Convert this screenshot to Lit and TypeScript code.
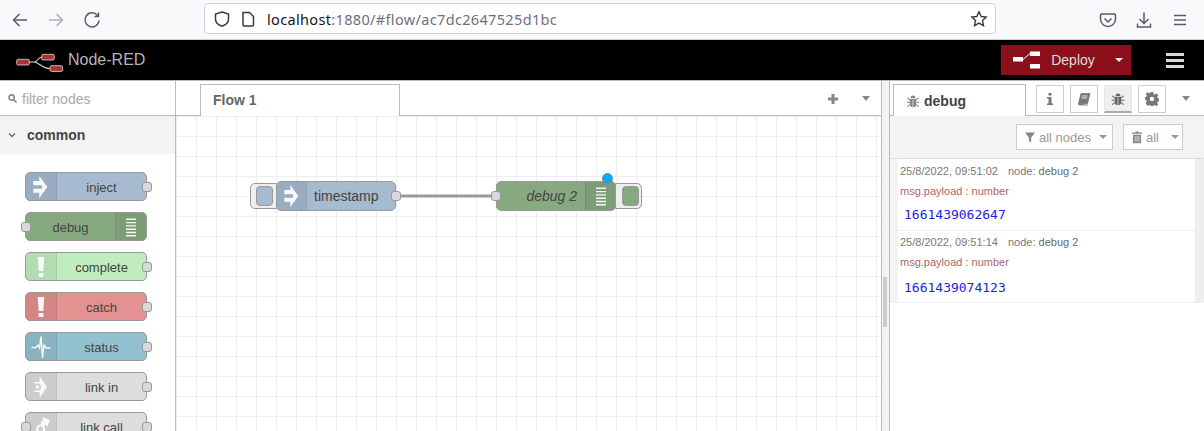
import { LitElement, html, css, svg } from "lit";
import { customElement } from "lit/decorators.js";

const injectIcon = svg`<path d="M.3 5H6.300V0L14.300 11 6.300 22V16.700H.3V12.700H9V9.300H.3z" fill="#fff" fill-opacity=".92"/>`;
const debugIcon = svg`<path d="M3 2.600h10V4H3zM3 5.900h10v1.400H3zM3 9.200h10v1.400H3zM3 12.500h10v1.400H3zM3 15.800h10v1.400H3zM3 19.100h10v1.400H3z" fill="#fff" fill-opacity=".92"/>`;
const bang = svg`<path d="M4.700 1h6.600l-1 14H5.700zM5.600 17h4.800v4H5.600z" fill="#fff" fill-opacity=".92"/>`;
const pulse = svg`<path d="M-1.500 11.500H3L5 9l1.500 3L8 .5 9.500 22 11 9l2 3h4.500" fill="none" stroke="#fff" stroke-opacity=".92" stroke-width="1.400"/>`;
const linkIn = svg`<path fill-rule="evenodd" d="M6.600 0L14 11 6.600 22v-6H1v-1.500h3.500a3.500 3.500 0 0 0 0-7H1V6h5.600z" fill="#fff" fill-opacity=".85"/><circle cx="4.500" cy="11" r="1.800" fill="#fff" fill-opacity=".85"/>`;
const linkCall = svg`<path d="M9 1l8 3-3 7-1.500-2.500L9 11 7.500 6l3-1.500z" fill="#fff" fill-opacity=".92"/><circle cx="7.700" cy="13" r="3.500" fill="none" stroke="#fff" stroke-opacity=".92" stroke-width="2"/>`;
const bug = svg`<path d="M5.200 4.500a2.800 2.800 0 0 1 5.600 0zM4.300 5.500h7.400v6a3.700 3.700 0 0 1-7.400 0z" fill="currentColor"/><path d="M1.500 4.500l2.800 2.300M14.500 4.500l-2.800 2.300M.8 9.500h3.500M15.200 9.500h-3.500M1.500 14.500l2.800-2.300M14.500 14.500l-2.800-2.300" fill="none" stroke="currentColor" stroke-width="1.200"/><path d="M7.600 6.500h.8v8.500h-.8z" fill="#f3f3f3"/>`;

type PNode = { label: string; color: string; icon: any; right?: boolean; inPort?: boolean; outPort?: boolean };
const nodes: PNode[] = [
  { label: "inject", color: "#a6bbcf", icon: injectIcon, outPort: true },
  { label: "debug", color: "#87a980", icon: debugIcon, right: true, inPort: true },
  { label: "complete", color: "#c0edc0", icon: bang, outPort: true },
  { label: "catch", color: "#e49191", icon: bang, outPort: true },
  { label: "status", color: "#94c1d0", icon: pulse, outPort: true },
  { label: "link in", color: "#dddddd", icon: linkIn, outPort: true },
  { label: "link call", color: "#dddddd", icon: linkCall, inPort: true, outPort: true },
];

@customElement("app-root")
export class AppRoot extends LitElement {
  static styles = css`
    :host { display: block; width: 1204px; height: 431px; overflow: hidden; font-family: "Liberation Sans", Arial, sans-serif; background: #fff; }
    .browser { height: 39px; background: #f9f9fb; border-bottom: 1px solid #cfcfd8; display: flex; align-items: center; box-sizing: content-box; }
    .nav { display: flex; width: 204px; padding-left: 10px; box-sizing: border-box; gap: 16px; color: #5b5b66; }
    .nav svg, .tools svg { width: 20px; height: 20px; display: block; }
    .url { width: 792px; height: 31px; margin-bottom: 2px; box-sizing: border-box; border: 1px solid #cfcfd8; border-radius: 4px; background: #fff; display: flex; align-items: center; padding: 1px 7px 0 8px; }
    .url svg { flex: none; width: 18px; height: 18px; }
    .url .page { margin-left: 9px; margin-right: 11px; width: 16px; height: 18px; }
    .addr { flex: 1; font-family: "Noto Sans", sans-serif; font-size: 14.5px; color: #15141a; white-space: nowrap; letter-spacing: 0.34px; }
    .addr span { color: #6f6f78; }
    .tools { display: flex; margin-left: 102px; gap: 16px; }
    .header { height: 40px; background: #000; border-bottom: 1px solid #b7b7b7; box-sizing: content-box; display: flex; align-items: center; }
    .logo { display: flex; align-items: center; margin-left: 16px; color: #b4b4b4; font-size: 16px; }
    .logo svg { width: 48px; height: 24px; margin-right: 4px; display: block; }
    .deploy { margin-left: auto; width: 130px; height: 30px; background: #8c101c; color: #ddd; display: flex; align-items: center; font-size: 14px; }
    .deploy svg { width: 28px; height: 18px; margin-left: 12px; }
    .deploy .lbl { margin-left: 3px; width: 58px; text-align: center; }
    .caret { width: 0; height: 0; border-left: 4.5px solid transparent; border-right: 4.5px solid transparent; border-top: 5px solid currentColor; display: block; flex: none; }
    .deploy .caret { color: #eee; margin-left: 13px; border-left-width: 4px; border-right-width: 4px; border-top-width: 4px; }
    .burger { width: 73px; display: flex; flex-direction: column; align-items: center; gap: 3px; padding-left: 15px; box-sizing: border-box; }
    .burger i { display: block; width: 18px; height: 3px; background: #d8d8d8; }
    .main { height: 350px; display: flex; }
    .palette { width: 176px; flex: none; border-right: 1px solid #bbb; box-sizing: border-box; overflow: hidden; }
    .search { height: 35px; border-bottom: 1px solid #bbb; box-sizing: border-box; display: flex; align-items: center; padding: 1px 0 0 8px; color: #aaa; font-size: 14px; gap: 5px; }
    .search svg { width: 9px; height: 9px; color: #888; }
    .cat { height: 38px; background: #f3f3f3; border-bottom: 1px solid #f3f3f3; display: flex; align-items: center; box-sizing: border-box; font-weight: bold; font-size: 14px; color: #444; padding-left: 8px; gap: 11px; }
    .cat svg { width: 8px; height: 8px; }
    .plist { padding-top: 18px; display: flex; flex-direction: column; gap: 11px; padding-left: 25px; }
    .pnode { position: relative; width: 122px; height: 29px; border: 1px solid #999; border-radius: 5px; box-sizing: border-box; display: flex; font-size: 13px; color: #444; align-items: center; }
    .ic { width: 31px; flex: none; height: 100%; background: rgba(0,0,0,.07); border-right: 1px solid rgba(0,0,0,.08); box-sizing: border-box; display: flex; align-items: center; justify-content: center; border-radius: 4px 0 0 4px; }
    .ic svg { width: 16px; height: 22px; display: block; overflow: visible; }
    .pnode.r .ic { border-right: 0; border-left: 1px solid rgba(0,0,0,.08); border-radius: 0 4px 4px 0; }
    .pnode .t { flex: 1; text-align: center; padding: 2px 0 0 0; }
    .port { position: absolute; width: 10px; height: 10px; background: #d9d9d9; border: 1px solid #999; border-radius: 3px; box-sizing: border-box; top: 9px; }
    .port.o { right: -6px; }
    .port.i { left: -5px; }
    .ws { flex: 1; position: relative; display: flex; flex-direction: column; min-width: 0; }
    .tabs { height: 35px; border-bottom: 1px solid #bbb; box-sizing: border-box; display: flex; position: relative; align-items: flex-end; padding-left: 24px; }
    .tab { width: 200px; height: 32px; border: 1px solid #bbb; border-bottom: 0; background: #fff; margin-bottom: -1px; box-sizing: border-box; font-weight: bold; font-size: 14px; color: #666; padding: 7px 12px; }
    .tabtools { position: absolute; right: 0; top: 0; height: 35px; display: flex; align-items: center; color: #888; }
    .tabtools .plus { width: 12px; height: 12px; margin-right: 21px; margin-left: -2px; transform: translateX(-2px); }
    .tabtools .plus svg { width: 12px; height: 12px; display: block; }
    .tabtools .caret { margin-right: 11px; }
    .canvas { flex: 1; position: relative; overflow: hidden;
      background-color: #fff;
      background-image: linear-gradient(#eee 1px, transparent 1px), linear-gradient(90deg, #eee 1px, transparent 1px);
      background-size: 20px 20px; background-position: 0 0; }
    .wire { position: absolute; left: 0; top: 0; width: 705px; height: 315px; }
    .node { position: absolute; top: 65px; width: 120px; height: 30px; border: 1px solid #999; border-radius: 5px; box-sizing: border-box; display: flex; align-items: center; color: #444; font-size: 14px; z-index: 2; }
    .node .ic { width: 30px; }
    .node .t { flex: 1; padding-left: 7px; }
    .node .t.it { font-style: italic; text-align: right; padding: 0 8px 0 0; }
    .node .ic.rt { border-radius: 0 4px 4px 0; border-right: 0; border-left: 1px solid rgba(0,0,0,.08); }
    .node .port { top: 9px; }
    .node .port.i { left: -6px; }
    .btn { position: absolute; top: 67px; width: 30px; height: 26px; background: #eee; border: 1px solid #999; border-radius: 5px; box-sizing: border-box; display: flex; align-items: center; padding-left: 5px; }
    .btn.rt { padding-left: 9px; }
    .btn i { display: block; width: 17px; height: 20px; border-radius: 4px; border: 1px solid #999; box-sizing: border-box; }
    .dot { position: absolute; top: -9px; right: 2px; width: 11px; height: 11px; background: #00acff; border: 1px solid #888; border-radius: 50%; box-sizing: border-box; }
    .sep { width: 9px; flex: none; background: #f3f3f3; border-left: 1px solid #bbb; border-right: 1px solid #bbb; box-sizing: border-box; position: relative; }
    .sep i { position: absolute; left: 1px; top: 196px; width: 4px; height: 50px; background: #ccc; }
    .side { width: 314px; flex: none; display: flex; flex-direction: column; }
    .stabs { height: 35px; border-bottom: 1px solid #bbb; box-sizing: border-box; display: flex; align-items: flex-end; padding-left: 3px; position: relative; }
    .stab { width: 133px; height: 32px; border: 1px solid #bbb; border-bottom: 0; background: #fff; margin-bottom: -1px; box-sizing: border-box; display: flex; align-items: center; padding-left: 12px; gap: 4px; font-weight: bold; font-size: 14px; color: #444; }
    .stab svg { width: 14px; height: 14px; color: #888; }
    .sbtns { position: absolute; left: 146px; top: 4px; display: flex; gap: 6px; }
    .sbtn { width: 28px; height: 28px; border: 1px solid #ccc; box-sizing: border-box; display: flex; align-items: center; justify-content: center; color: #777; }
    .sbtn.on { background: #efefef; border-bottom: 2px solid #aaa; border-color: #e6e6e6 #e6e6e6 #aaa; color: #666; }
    .sbtn svg { width: 14px; height: 14px; display: block; }
    .scaret { position: absolute; right: 14px; top: 15px; color: #888; }
    .dbar { height: 43px; background: #f3f3f3; border-bottom: 1px solid #ddd; box-sizing: border-box; display: flex; justify-content: flex-end; align-items: center; padding-right: 21px; gap: 10px; }
    .sel { height: 26px; border: 1px solid #ccc; background: #fff; box-sizing: border-box; display: flex; align-items: center; padding: 0 0 0 8px; font-size: 13px; color: #999; gap: 4px; width: 97px; }
    .sel.short { width: 60px; }
    .sel svg { width: 10px; height: 14px; color: #888; flex: none; }
    .sel .caret { color: #999; margin-left: 4px; border-left-width: 4px; border-right-width: 4px; border-top-width: 4px; }
    .sel.short .caret { margin-left: 8px; }
    .msgs { flex: 1; background: #fff; }
    .msg { height: 72px; border-bottom: 1px solid #eee; border-left: 8px solid #f3f3f3; border-right: 9px solid #eee; box-sizing: border-box; background: #fff; padding-left: 2px; font-size: 11px; }
    .meta { color: #777; height: 23px; padding-top: 6px; box-sizing: border-box; line-height: 13px; }
    .msg.next .meta { padding-top: 5px; height: 22px; }
    .meta b { font-weight: normal; margin-left: 7px; color: #777; }
    .meta b span { color: #6a6a6a; }
    .topic { color: #a66; height: 19px; line-height: 19px; }
    .msg.next .topic { height: 20px; }
    .val { font-family: "DejaVu Sans Mono", monospace; font-size: 13px; color: #2222e8; padding-left: 4px; margin-top: 5px; line-height: 18px; }
    .msg.next .val { margin-top: 6px; }
  `;

  render() {
    return html`
      <div class="browser">
        <div class="nav">
          <svg viewBox="0 0 20 20" fill="none" stroke="currentColor" stroke-width="1.5"><path d="M17 10H4M9.500 4l-6 6 6 6"/></svg>
          <svg viewBox="0 0 20 20" fill="none" stroke="#b0b0b6" stroke-width="1.5"><path d="M3 10h13M10.500 4l6 6-6 6"/></svg>
          <svg viewBox="0 0 20 20" fill="none" stroke="currentColor" stroke-width="1.5"><path d="M15.500 5.500A7 7 0 1 0 17 10.500M16.500 2.500v4h-4"/></svg>
        </div>
        <div class="url">
          <svg viewBox="0 0 18 18" fill="none" stroke="#3a3a44" stroke-width="1.5"><path d="M9 2l6.500 2v5c0 3.500-2.800 6-6.500 7.200C5.300 15 2.500 12.500 2.500 9V4z"/></svg>
          <svg class="page" viewBox="0 0 16 18" fill="none" stroke="#3a3a44" stroke-width="1.5"><path d="M3 2.500h6.500l4 4V15a1 1 0 0 1-1 1H4a1 1 0 0 1-1-1z"/></svg>
          <div class="addr">localhost<span>:1880/#flow/ac7dc2647525d1bc</span></div>
          <svg viewBox="0 0 18 18" fill="none" stroke="#3a3a44" stroke-width="1.4"><path d="M9 1.800l2.200 4.700 5 .6-3.700 3.500 1 5L9 13.100l-4.500 2.500 1-5L1.800 7.100l5-.6z"/></svg>
        </div>
        <div class="tools">
          <svg viewBox="0 0 20 20" fill="none" stroke="#5b5b66" stroke-width="1.5"><path d="M4 4h12a1.500 1.500 0 0 1 1.500 1.500V9a7.500 7.500 0 0 1-15 0V5.500A1.500 1.500 0 0 1 4 4zM6.500 8.500l3.500 3.500 3.500-3.500"/></svg>
          <svg viewBox="0 0 20 20" fill="none" stroke="#5b5b66" stroke-width="1.5"><path d="M10 2.500v11M5.500 9l4.500 4.500L14.500 9M3.500 13.500v3.500h13v-3.500"/></svg>
          <svg viewBox="0 0 20 20" fill="none" stroke="#5b5b66" stroke-width="1.5"><path d="M4 5.500h12M4 10h12M4 14.500h12"/></svg>
        </div>
      </div>
      <div class="header">
        <div class="logo">
          <svg viewBox="0 0 48 24" fill="none">
            <path d="M13 14h5c4 0 4-5 8-5M18 14c5 0 8 6.500 16 6.500" stroke="#ddd" stroke-width="1.100"/>
            <rect x=".7" y="11.300" width="12.600" height="5.700" rx="1.500" fill="#a33" stroke="#ddd" stroke-width=".8"/>
            <rect x="25.700" y="6.300" width="12.600" height="5.700" rx="1.500" fill="#a33" stroke="#ddd" stroke-width=".8"/>
            <rect x="34" y="17.700" width="12.600" height="5.700" rx="1.500" fill="#a33" stroke="#ddd" stroke-width=".8"/>
          </svg>
          Node-RED
        </div>
        <div class="deploy">
          <svg viewBox="0 0 28 18" fill="#fff"><rect x="0" y="6" width="10" height="4.500"/><rect x="17" y="0.500" width="10" height="4.500"/><rect x="17" y="13" width="10" height="4.500"/><path d="M10 8.500l7-6" stroke="#fff" stroke-width="1" fill="none"/></svg>
          <span class="lbl">Deploy</span>
          <span class="caret"></span>
        </div>
        <div class="burger"><i></i><i></i><i></i></div>
      </div>
      <div class="main">
        <div class="palette">
          <div class="search">
            <svg viewBox="0 0 10 10" fill="none" stroke="currentColor" stroke-width="1.800"><circle cx="4" cy="4" r="3"/><path d="M6.500 6.500L9.500 9.500"/></svg>
            filter nodes
          </div>
          <div class="cat">
            <svg viewBox="0 0 8 8" fill="none" stroke="#666" stroke-width="1.300"><path d="M1 2.500l3 3 3-3"/></svg>
            common
          </div>
          <div class="plist">
            ${nodes.map(n => html`
              <div class="pnode ${n.right ? "r" : ""}" style="background:${n.color}">
                ${n.inPort ? html`<span class="port i"></span>` : ""}
                ${n.right ? "" : html`<span class="ic"><svg viewBox="0 0 16 22">${n.icon}</svg></span>`}
                <span class="t">${n.label}</span>
                ${n.right ? html`<span class="ic"><svg viewBox="0 0 16 22">${n.icon}</svg></span>` : ""}
                ${n.outPort ? html`<span class="port o"></span>` : ""}
              </div>`)}
          </div>
        </div>
        <div class="ws">
          <div class="tabs">
            <div class="tab">Flow 1</div>
            <div class="tabtools">
              <span class="plus"><svg viewBox="0 0 12 12"><path d="M4.500 1h3v3.500H11v3H7.500V11h-3V7.500H1v-3h3.500z" fill="currentColor"/></svg></span>
              <span class="caret"></span>
            </div>
          </div>
          <div class="canvas">
            <svg class="wire"><path d="M220 80H320" stroke="#999" stroke-width="3" fill="none"/></svg>
            <div class="btn" style="left:74px;"><i style="background:#a6bbcf"></i></div>
            <div class="node" style="left:100px;background:#a6bbcf">
              <span class="ic"><svg viewBox="0 0 16 22">${injectIcon}</svg></span>
              <span class="t">timestamp</span>
              <span class="port o"></span>
            </div>
            <div class="btn rt" style="left:436px;"><i style="background:#87a980"></i></div>
            <div class="node" style="left:320px;background:#87a980">
              <span class="port i"></span>
              <span class="t it">debug 2</span>
              <span class="ic rt"><svg viewBox="0 0 16 22">${debugIcon}</svg></span>
              <span class="dot"></span>
            </div>
          </div>
        </div>
        <div class="sep"><i></i></div>
        <div class="side">
          <div class="stabs">
            <div class="stab"><svg viewBox="0 0 16 16">${bug}</svg>debug</div>
            <div class="sbtns">
              <span class="sbtn"><svg viewBox="0 0 14 14"><path d="M5.500 1h3v2.500h-3zM4 5h4.500v6.500H10V13H4v-1.500h1.500V6.500H4z" fill="currentColor"/></svg></span>
              <span class="sbtn"><svg viewBox="0 0 14 14"><path d="M4 1.500h9L10.500 11.500H1.500z M1.500 11.500a1.200 1.200 0 0 0 1 1.500H11" fill="currentColor" stroke="currentColor" stroke-width=".8"/><path d="M5 4h5.500M4.500 6h5.500" stroke="#fff" stroke-width=".8"/></svg></span>
              <span class="sbtn on"><svg viewBox="0 0 16 16">${bug}</svg></span>
              <span class="sbtn"><svg viewBox="0 0 14 14"><path fill-rule="evenodd" d="M5.800 0h2.400l.4 2 1.300.6 1.700-1.100 1.700 1.700-1.100 1.700.6 1.300 2 .4v2.400l-2 .4-.6 1.300 1.100 1.700-1.700 1.700-1.700-1.100-1.300.6-.4 2H5.800l-.4-2-1.300-.6-1.700 1.100L.7 11.100l1.100-1.700-.6-1.300-2-.4V5.300l2-.4.6-1.300L.7 1.900 2.400.2l1.700 1.100 1.300-.6zM7 4.800a2.200 2.200 0 1 0 0 4.400 2.200 2.200 0 0 0 0-4.400z" fill="currentColor"/></svg></span>
            </div>
            <span class="caret scaret"></span>
          </div>
          <div class="dbar">
            <div class="sel"><svg viewBox="0 0 11 14"><path d="M0 2h11L6.800 7.500V13L4.200 11.500v-4z" fill="currentColor"/></svg>all nodes<span class="caret"></span></div>
            <div class="sel short"><svg viewBox="0 0 11 14"><path d="M4 1h3l.5 1H11v1.500H0V2h3.500zM1 4.500h9V13a1 1 0 0 1-1 1H2a1 1 0 0 1-1-1z" fill="currentColor"/><path d="M3.500 6v6M5.500 6v6M7.500 6v6" stroke="#fff" stroke-width=".7"/></svg>all<span class="caret"></span></div>
          </div>
          <div class="msgs">
            <div class="msg">
              <div class="meta">25/8/2022, 09:51:02 <b>node: <span>debug 2</span></b></div>
              <div class="topic">msg.payload : number</div>
              <div class="val">1661439062647</div>
            </div>
            <div class="msg next">
              <div class="meta">25/8/2022, 09:51:14 <b>node: <span>debug 2</span></b></div>
              <div class="topic">msg.payload : number</div>
              <div class="val">1661439074123</div>
            </div>
          </div>
        </div>
      </div>
    `;
  }
}
